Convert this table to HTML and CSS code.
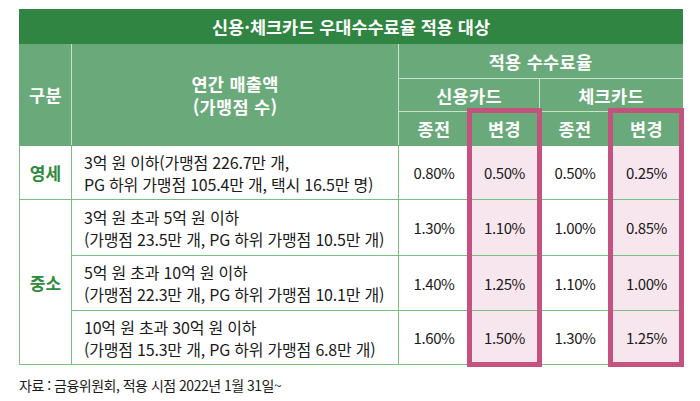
FILE: index.html
```html
<!DOCTYPE html>
<html lang="ko">
<head>
<meta charset="utf-8">
<link rel="stylesheet" href="styles.css">
</head>
<body>
<div class="page">
  <div class="wrap">
    <table class="fees">
      <colgroup>
        <col class="c1"><col class="c2"><col class="c3"><col class="c4"><col class="c5"><col class="c6">
      </colgroup>
      <thead>
        <tr class="r-title"><th colspan="6" class="title">신용·체크카드 우대수수료율 적용 대상</th></tr>
        <tr class="r-h1">
          <th rowspan="3" class="hd hd-first">구분</th>
          <th rowspan="3" class="hd">연간 매출액<br>(가맹점 수)</th>
          <th colspan="4" class="hd hd-last">적용 수수료율</th>
        </tr>
        <tr class="r-h2">
          <th colspan="2" class="hd">신용카드</th>
          <th colspan="2" class="hd hd-last">체크카드</th>
        </tr>
        <tr class="r-h3">
          <th class="hd">종전</th>
          <th class="hd">변경</th>
          <th class="hd">종전</th>
          <th class="hd hd-last">변경</th>
        </tr>
      </thead>
      <tbody>
        <tr class="r-d1 grp">
          <td class="cat">영세</td>
          <td class="desc">3억 원 이하(가맹점 226.7만 개,<br>PG 하위 가맹점 105.4만 개, 택시 16.5만 명)</td>
          <td class="num">0.80%</td>
          <td class="num new">0.50%</td>
          <td class="num">0.50%</td>
          <td class="num new">0.25%</td>
        </tr>
        <tr class="r-d2 grp">
          <td class="cat" rowspan="3">중소</td>
          <td class="desc">3억 원 초과 5억 원 이하<br>(가맹점 23.5만 개, PG 하위 가맹점 10.5만 개)</td>
          <td class="num">1.30%</td>
          <td class="num new">1.10%</td>
          <td class="num">1.00%</td>
          <td class="num new">0.85%</td>
        </tr>
        <tr class="r-d3">
          <td class="desc">5억 원 초과 10억 원 이하<br>(가맹점 22.3만 개, PG 하위 가맹점 10.1만 개)</td>
          <td class="num">1.40%</td>
          <td class="num new">1.25%</td>
          <td class="num">1.10%</td>
          <td class="num new">1.00%</td>
        </tr>
        <tr class="r-d4">
          <td class="desc">10억 원 초과 30억 원 이하<br>(가맹점 15.3만 개, PG 하위 가맹점 6.8만 개)</td>
          <td class="num">1.60%</td>
          <td class="num new">1.50%</td>
          <td class="num">1.30%</td>
          <td class="num new">1.25%</td>
        </tr>
      </tbody>
    </table>
    <div class="hl hl-credit"></div>
    <div class="hl hl-check"></div>
  </div>
  <p class="source">자료 : 금융위원회, 적용 시점 2022년 1월 31일~</p>
</div>
</body>
</html>
```
FILE: styles.css
```css
html, body {
  margin: 0;
  padding: 0;
  background: #ffffff;
}
body {
  font-family: "Noto Sans CJK KR", "Noto Sans", sans-serif;
  color: #1a1a1a;
}
.page {
  padding: 9px 0 0 19px;
}
.wrap {
  position: relative;
  width: 663px;
}
.fees {
  width: 663px;
  table-layout: fixed;
  border-collapse: collapse;
}
.c1 { width: 52px; }
.c2 { width: 327px; }
.c3 { width: 71px; }
.c4 { width: 70px; }
.c5 { width: 71px; }
.c6 { width: 72px; }

.fees th, .fees td {
  padding: 0;
  text-align: center;
  vertical-align: middle;
}
.r-title { height: 34px; }
.r-h1 { height: 35px; }
.r-h2 { height: 33px; }
.r-h3 { height: 34px; }
.r-d1 { height: 54px; }
.r-d2 { height: 56px; }
.r-d3 { height: 55px; }
.r-d4 { height: 54px; }

.fees .title {
  background: #2f8541;
  color: #ffffff;
  font-size: 17.5px;
  font-weight: 700;
  letter-spacing: 0;
  border: 1px solid #2f8541;
}
.fees .hd {
  background: #6aa97a;
  color: #ffffff;
  font-size: 17.5px;
  font-weight: 700;
  letter-spacing: 0.3px;
  line-height: 23px;
  border: 1px solid #c9e2cd;
}
.fees .hd-first { border-left-color: #6aa97a; }
.fees .hd-last { border-right-color: #6aa97a; }
.fees .r-h1 .hd { border-top-color: #6aa97a; }
.fees .r-h3 .hd, .fees .r-h1 .hd[rowspan] { border-bottom-color: #6aa97a; }

.fees td {
  border: 1px solid #79c07f;
  font-size: 16px;
  letter-spacing: -0.2px;
}
.fees .cat {
  color: #2e8b3e;
  font-weight: 700;
  font-size: 17px;
  letter-spacing: 0;
}
.fees .desc {
  text-align: left;
  padding-left: 12px;
  line-height: 22px;
}
.fees .num {
  font-size: 15px;
  letter-spacing: -0.4px;
}
.fees .new {
  background: #f7e6ed;
}
.hl {
  position: absolute;
  top: 99px;
  height: 259px;
  box-sizing: border-box;
  border: 5px solid #c4527e;
  pointer-events: none;
}
.hl-credit {
  left: 448px;
  width: 75px;
}
.hl-check {
  left: 589px;
  width: 76px;
}
.source {
  margin: 10px 0 0 0;
  font-size: 14px;
  letter-spacing: -0.5px;
  color: #1a1a1a;
}
```
